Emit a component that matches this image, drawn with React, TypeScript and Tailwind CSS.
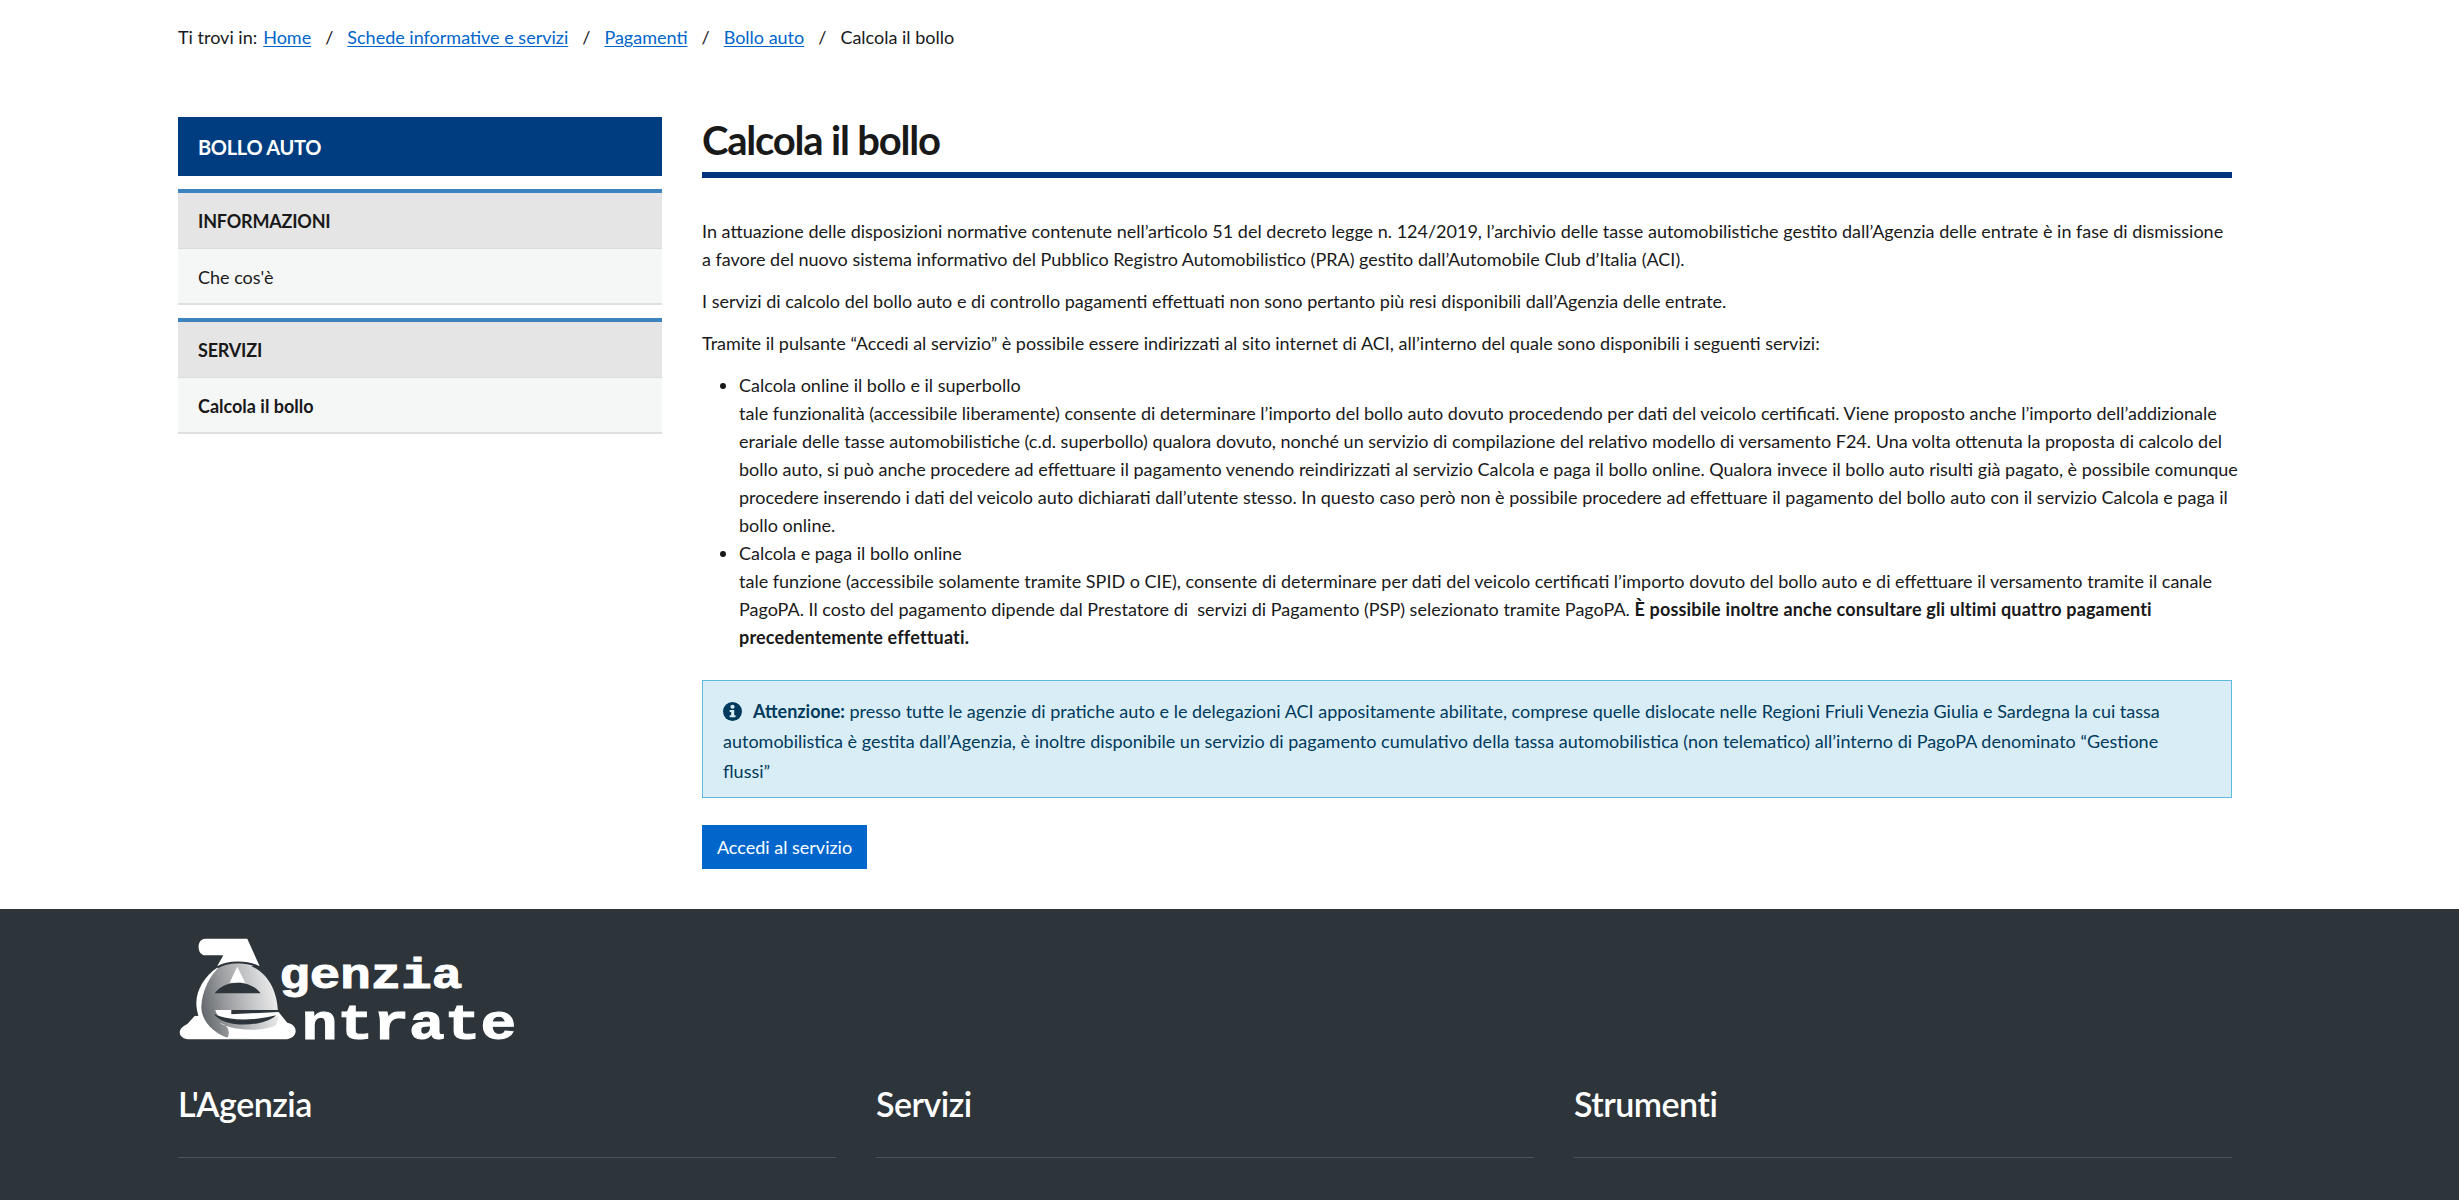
const Logo = () => (
  <svg width="343" height="115" viewBox="50 45 1030 345" className="block overflow-visible" role="img" aria-label="Agenzia Entrate">
    <defs>
      <linearGradient id="lg" x1="0" y1="0.6" x2="1" y2="0.4">
        <stop offset="0" stopColor="#64686c" />
        <stop offset="0.3" stopColor="#97999c" />
        <stop offset="0.65" stopColor="#c6c7c9" />
        <stop offset="1" stopColor="#f0f0f0" />
      </linearGradient>
    </defs>
    <path d="M132 50H258L295 132H168L186 100H132C105 100 105 50 132 50Z" fill="#fff" />
    <path d="M100 282L78 306C42 322 52 352 85 352H370C412 352 414 308 378 302L352 270Z" fill="#fff" />
    <path d="M172 134C130 160 105 205 105 242C105 270 115 300 135 325L210 349L210 134Z" fill="#fff" />
    <path d="M228 124C290 124 345 175 350 264H162C168 296 220 310 290 300L352 282C350 320 315 345 262 349H205C155 335 120 295 120 255C122 205 148 155 178 132C195 126 212 124 228 124Z" fill="url(#lg)" />
    <path d="M168 136C200 116 262 116 298 138" fill="none" stroke="#2d343a" strokeWidth="6" />
    <path d="M228 134L252 182H205Z" fill="#fff" />
    <path d="M160 214C178 190 205 182 230 182C258 182 285 195 298 214Z" fill="#2d343a" />
    <path d="M158 276C200 296 270 298 345 280C320 303 265 312 220 306C190 302 170 292 158 276Z" fill="#2d343a" />
    <path d="M175 304C196 306 210 326 198 349H280C335 345 368 325 362 300C330 325 240 335 175 304Z" fill="#fff" />
    <text x="354" y="197" fill="#fff" stroke="#fff" strokeWidth="3" fontFamily="'Liberation Mono', monospace" fontWeight="700" fontSize="126" textLength="550" lengthAdjust="spacingAndGlyphs">genzia</text>
    <text x="422" y="350" fill="#fff" stroke="#fff" strokeWidth="3" fontFamily="'Liberation Mono', monospace" fontWeight="700" fontSize="150" textLength="644" lengthAdjust="spacingAndGlyphs">ntrate</text>
  </svg>
);

const Crumb = ({ children }: { children: string }) => (
  <>
    <a href="#" className="text-[#0066cc] underline underline-offset-2">{children}</a>
    <span className="mx-[14px]">/</span>
  </>
);

const Section = ({ title, item, bold }: { title: string; item: string; bold?: boolean }) => (
  <div className="mt-[13px]">
    <div className="h-[60px] flex items-center pl-5 bg-[#e5e5e5] border-t-[4px] border-[#3d83bf] border-b border-b-[#dcdcdc] font-bold text-[#19191a] uppercase tracking-[-0.2px]">{title}</div>
    <div className={`h-[56px] flex items-center pl-5 pt-[2px] bg-[#f5f6f6] border-b-2 border-[#e0e0e0] text-[#19191a] ${bold ? "font-bold" : ""}`}>{item}</div>
  </div>
);

const FooterCol = ({ title }: { title: string }) => (
  <div className="border-b border-[#4c5359] h-[78px] pt-[1px] text-[34px] leading-[46px] font-semibold tracking-[-0.5px] text-white">{title}</div>
);

export default function App() {
  return (
    <div className="h-[1200px] overflow-hidden flex flex-col bg-white text-[18px] leading-[28px] text-[#19191a] font-['Lato',sans-serif]">
      <div className="ml-[178px] w-[2054px] flex-1">
        <div className="pt-[23px] h-[117px] whitespace-nowrap">
          <span className="mr-[6px]">Ti trovi in:</span>
          <Crumb>Home</Crumb>
          <Crumb>Schede informative e servizi</Crumb>
          <Crumb>Pagamenti</Crumb>
          <Crumb>Bollo auto</Crumb>
          <span>Calcola il bollo</span>
        </div>
        <div className="flex gap-10">
          <aside className="w-[484px] shrink-0">
            <div className="h-[59px] flex items-center pl-5 bg-[#003d80] text-white text-[20px] font-bold tracking-[-0.3px]">BOLLO AUTO</div>
            <Section title="Informazioni" item="Che cos'è" />
            <Section title="Servizi" item="Calcola il bollo" bold />
          </aside>
          <main className="flex-1 min-w-0 whitespace-nowrap">
            <h1 className="h-[61px] border-b-[6px] border-[#00337f] text-[40px] leading-[46px] font-bold tracking-[-1.2px] text-[#19191a]">Calcola il bollo</h1>
            <p className="mt-[39px]">
              In attuazione delle disposizioni normative contenute nell’articolo 51 del decreto legge n. 124/2019, l’archivio delle tasse automobilistiche gestito dall’Agenzia delle entrate è in fase di dismissione<br />
              a favore del nuovo sistema informativo del Pubblico Registro Automobilistico (PRA) gestito dall’Automobile Club d’Italia (ACI).
            </p>
            <p className="mt-[14px]">I servizi di calcolo del bollo auto e di controllo pagamenti effettuati non sono pertanto più resi disponibili dall’Agenzia delle entrate.</p>
            <p className="mt-[14px]">Tramite il pulsante “Accedi al servizio” è possibile essere indirizzati al sito internet di ACI, all’interno del quale sono disponibili i seguenti servizi:</p>
            <ul className="mt-[14px] pl-[37px] list-disc">
              <li>
                Calcola online il bollo e il superbollo<br />
                tale funzionalità (accessibile liberamente) consente di determinare l’importo del bollo auto dovuto procedendo per dati del veicolo certificati. Viene proposto anche l’importo dell’addizionale<br />
                erariale delle tasse automobilistiche (c.d. superbollo) qualora dovuto, nonché un servizio di compilazione del relativo modello di versamento F24. Una volta ottenuta la proposta di calcolo del<br />
                bollo auto, si può anche procedere ad effettuare il pagamento venendo reindirizzati al servizio Calcola e paga il bollo online. Qualora invece il bollo auto risulti già pagato, è possibile comunque<br />
                procedere inserendo i dati del veicolo auto dichiarati dall’utente stesso. In questo caso però non è possibile procedere ad effettuare il pagamento del bollo auto con il servizio Calcola e paga il<br />
                bollo online.
              </li>
              <li>
                Calcola e paga il bollo online<br />
                tale funzione (accessibile solamente tramite SPID o CIE), consente di determinare per dati del veicolo certificati l’importo dovuto del bollo auto e di effettuare il versamento tramite il canale<br />
                PagoPA. Il costo del pagamento dipende dal Prestatore di&nbsp; servizi di Pagamento (PSP) selezionato tramite PagoPA. <b className="tracking-[0.17px]">È possibile inoltre anche consultare gli ultimi quattro pagamenti<br />
                precedentemente effettuati.</b>
              </li>
            </ul>
            <div className="mt-[29px] h-[118px] bg-[#d9edf7] border border-[#5fb9df] px-5 pt-[15px] text-[#003a5c] leading-[30px]">
              <span className="inline-block align-[-3px] mr-[11px]">
                <svg width="19" height="19" viewBox="0 0 20 20" className="block">
                  <circle cx="10" cy="10" r="10" fill="#003a5c" />
                  <circle cx="10" cy="5" r="2.2" fill="#d9edf7" />
                  <path d="M7 8.5H11.8V14H13.2V16H7V14H8.6V10.5H7Z" fill="#d9edf7" />
                </svg>
              </span>
              <b>Attenzione:</b> presso tutte le agenzie di pratiche auto e le delegazioni ACI appositamente abilitate, comprese quelle dislocate nelle Regioni Friuli Venezia Giulia e Sardegna la cui tassa<br />
              automobilistica è gestita dall’Agenzia, è inoltre disponibile un servizio di pagamento cumulativo della tassa automobilistica (non telematico) all’interno di PagoPA denominato “Gestione<br />
              flussi”
            </div>
            <button className="mt-[27px] block h-[44px] w-[165px] bg-[#0066cc] text-white text-center">Accedi al servizio</button>
          </main>
        </div>
      </div>
      <footer className="h-[291px] shrink-0 bg-[#2d343a]">
        <div className="ml-[178px] w-[2054px] pt-7">
          <Logo />
          <div className="mt-[28px] grid grid-cols-3 gap-10">
            <FooterCol title="L'Agenzia" />
            <FooterCol title="Servizi" />
            <FooterCol title="Strumenti" />
          </div>
        </div>
      </footer>
    </div>
  );
}
